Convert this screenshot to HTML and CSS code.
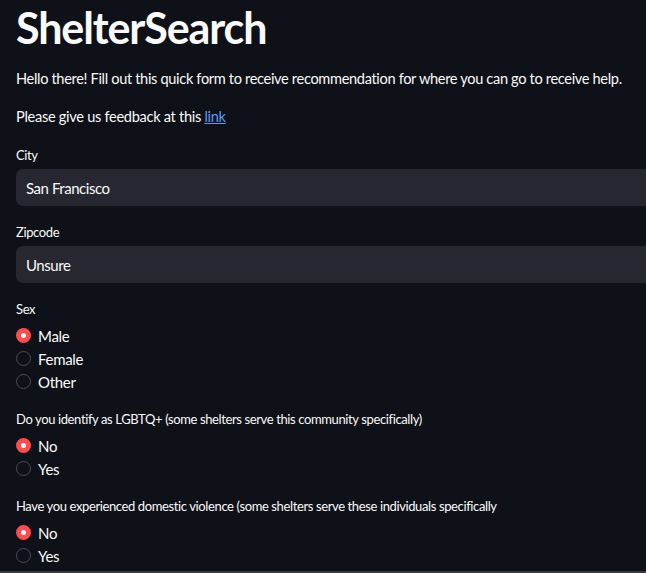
FILE: index.html
```html
<!DOCTYPE html>
<html lang="en">
<head>
<meta charset="utf-8">
<title>ShelterSearch</title>
<link rel="stylesheet" href="styles.css">
</head>
<body>
<main class="app">
  <h1 class="title">ShelterSearch</h1>
  <p class="intro">Hello there! Fill out this quick form to receive recommendation for where you can go to receive help.</p>
  <p class="feedback">Please give us feedback at this <a href="#" class="link">link</a></p>

  <div class="field">
    <label class="field-label">City</label>
    <div class="text-input">San Francisco</div>
  </div>

  <div class="field">
    <label class="field-label">Zipcode</label>
    <div class="text-input">Unsure</div>
  </div>

  <div class="field">
    <div class="field-label">Sex</div>
    <div class="radio-group">
      <div class="radio-row"><span class="radio checked"></span><span class="radio-text">Male</span></div>
      <div class="radio-row"><span class="radio"></span><span class="radio-text">Female</span></div>
      <div class="radio-row"><span class="radio"></span><span class="radio-text">Other</span></div>
    </div>
  </div>

  <div class="field">
    <div class="field-label">Do you identify as LGBTQ+ (some shelters serve this community specifically)</div>
    <div class="radio-group">
      <div class="radio-row"><span class="radio checked"></span><span class="radio-text">No</span></div>
      <div class="radio-row"><span class="radio"></span><span class="radio-text">Yes</span></div>
    </div>
  </div>

  <div class="field">
    <div class="field-label">Have you experienced domestic violence (some shelters serve these individuals specifically</div>
    <div class="radio-group">
      <div class="radio-row"><span class="radio checked"></span><span class="radio-text">No</span></div>
      <div class="radio-row"><span class="radio"></span><span class="radio-text">Yes</span></div>
    </div>
  </div>
</main>
</body>
</html>
```

FILE: styles.css
```css
html, body {
  margin: 0;
  padding: 0;
  background: #0e1117;
  overflow: hidden;
}

body {
  color: #fafafa;
  font-family: "Lato", "Open Sans", sans-serif;
  height: 573px;
}

body::after {
  content: "";
  position: fixed;
  left: 0;
  right: 0;
  bottom: 0;
  height: 2px;
  background: #3a3c44;
}

.app {
  padding: 1px 0 0 16px;
}

.title {
  margin: 0;
  font-size: 43px;
  line-height: 53px;
  font-weight: 700;
  letter-spacing: -1.1px;
}

.intro {
  margin: 13px 0 0;
  font-size: 14.6px;
  line-height: 24px;
  letter-spacing: -0.34px;
  white-space: nowrap;
}

.feedback {
  margin: 14px 0 0;
  font-size: 14.6px;
  line-height: 24px;
  letter-spacing: -0.3px;
}

.link {
  color: #5b9ef2;
  text-decoration: underline;
}

.field {
  margin-top: 16px;
  display: flex;
  flex-direction: column;
}

.field-label {
  font-size: 13px;
  line-height: 20px;
  letter-spacing: -0.38px;
  white-space: nowrap;
}

.text-input {
  margin-top: 4px;
  margin-right: -20px;
  height: 37px;
  box-sizing: border-box;
  padding: 0 10px;
  display: flex;
  align-items: center;
  background: #262730;
  border-radius: 7px;
  font-size: 15px;
  letter-spacing: -0.45px;
}

.radio-group {
  margin-top: 5px;
  display: flex;
  flex-direction: column;
}

.radio-row {
  height: 23px;
  display: flex;
  align-items: center;
  gap: 7px;
}

.radio {
  width: 15px;
  height: 15px;
  box-sizing: border-box;
  border-radius: 50%;
  border: 1px solid #4a4d56;
  background: #0e1117;
  flex: none;
}

.radio.checked {
  border: 5px solid #ff4b4b;
  background: #ffffff;
}

.radio-text {
  font-size: 15px;
  line-height: 20px;
  letter-spacing: -0.3px;
}
```
